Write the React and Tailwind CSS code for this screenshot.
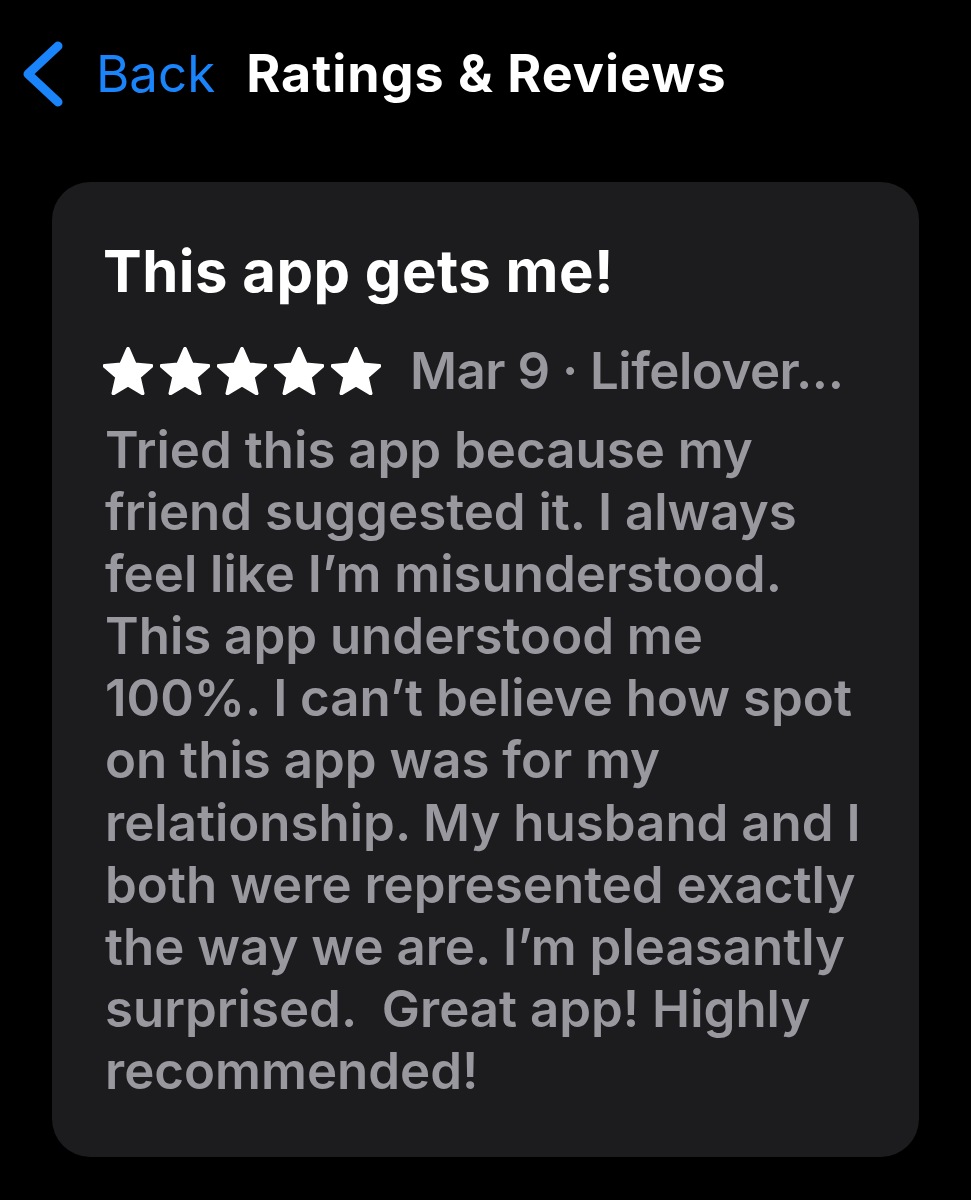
import { useState } from "react";

const lines = [
  "Tried this app because my",
  "friend suggested it. I always",
  "feel like I’m misunderstood.",
  "This app understood me",
  "100%. I can’t believe how spot",
  "on this app was for my",
  "relationship. My husband and I",
  "both were represented exactly",
  "the way we are. I’m pleasantly",
  "surprised.  Great app! Highly",
  "recommended!",
];

function Star() {
  return (
    <svg className="w-[50px] h-[48px] shrink-0" viewBox="1.4 1.5 21.2 20.2" fill="white">
      <path
        stroke="white"
        strokeWidth={1.6}
        strokeLinejoin="round"
        d="M12 2.2l2.9 6.6 7.1.6-5.4 4.7 1.6 7-6.2-3.7-6.2 3.7 1.6-7L2 9.4l7.1-.6z"
      />
    </svg>
  );
}

export default function App() {
  const [rating] = useState(5);

  return (
    <div className="min-h-[1200px] bg-black font-['Inter','Noto_Sans',sans-serif] antialiased">
      {/* Nav bar */}
      <div className="flex items-center pt-[42px] h-[105px]">
        <button className="flex items-center text-[#1a84fb] pl-[20px]">
          <svg className="w-[46px] h-[66px]" viewBox="0 0 46 66" fill="none" stroke="currentColor">
            <path strokeWidth={9} strokeLinecap="round" strokeLinejoin="round" d="M38 5 L8 33 L38 61" />
          </svg>
          <span className="ml-[30px] text-[51px] leading-[62px]">Back</span>
        </button>
        <h1 className="ml-[31px] text-white font-bold text-[52px] leading-[62px] tracking-[1px]">
          Ratings &amp; Reviews
        </h1>
      </div>

      {/* Review card */}
      <div className="mx-[52px] mt-[77px] h-[975px] rounded-[38px] bg-[#1c1c1e] pl-[53px] pr-[30px] pt-[54px]">
        <h2 className="text-white font-bold text-[58px] leading-[70px] tracking-[0.5px] -ml-[2px]">
          This app gets me!
        </h2>

        <div className="flex items-center mt-[34px] h-[62px]">
          <div className="flex items-center gap-[7px] -ml-[2px]">
            {Array.from({ length: rating }).map((_, i) => (
              <Star key={i} />
            ))}
          </div>
          <span className="ml-[29px] text-[#98989e] font-semibold text-[51px] leading-[62px] whitespace-nowrap tracking-[-0.5px]">
            Mar 9 · Lifelover...
          </span>
        </div>

        <div className="mt-[17px] text-[#98989e] font-semibold text-[51px] leading-[62.1px]">
          {lines.map((l, i) => (
            <div key={i} className="whitespace-pre">
              {l}
            </div>
          ))}
        </div>
      </div>
    </div>
  );
}
